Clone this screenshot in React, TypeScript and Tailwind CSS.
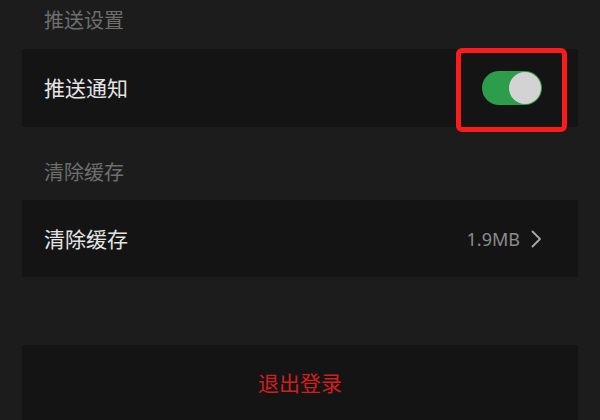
import React from "react";

const cjk = { fontFamily: '"Noto Sans CJK SC", "Noto Sans", sans-serif' };

function Toggle() {
  return (
    <div className="relative">
      <div className="w-[60px] h-[34px] rounded-full bg-[#2b9d4b] flex items-center justify-end pr-[1px]">
        <div className="w-[32px] h-[32px] rounded-full bg-[#d3d3d3]" />
      </div>
      <div className="absolute left-[-26px] top-[-23px] w-[111px] h-[84px] border-[5px] border-[#fb1b1b] rounded-[6px]" />
    </div>
  );
}

export default function App() {
  return (
    <div className="w-[600px] h-[420px] overflow-hidden bg-[#1c1c1c] flex flex-col" style={cjk}>
      <div className="h-[49px] pl-[44px] flex items-center text-[20px] text-[#6e6e6e] leading-none pb-[8px]">
        推送设置
      </div>
      <div className="mx-[22px] h-[79px] bg-[#141414] flex items-center justify-between pl-[22px] pr-[36px]">
        <span className="text-[21px] text-[#e4e4e4] leading-none">推送通知</span>
        <Toggle />
      </div>
      <div className="h-[74px] pl-[44px] flex items-center text-[20px] text-[#6e6e6e] leading-none pt-[16px]">
        清除缓存
      </div>
      <div className="mx-[22px] h-[78px] bg-[#141414] flex items-center justify-between pl-[22px] pr-[36px]">
        <span className="text-[21px] text-[#e4e4e4] leading-none">清除缓存</span>
        <div className="flex items-center gap-[11px]">
          <span className="text-[18px] text-[#8c8c8c] leading-none" style={{ fontFamily: '"Noto Sans", sans-serif' }}>
            1.9MB
          </span>
          <svg width="11" height="18" viewBox="0 0 11 18" fill="none">
            <path d="M1.5 1.5 L9 9 L1.5 16.5" stroke="#a8a8a8" strokeWidth="1.8" strokeLinecap="round" strokeLinejoin="round" />
          </svg>
        </div>
      </div>
      <div className="h-[68px]" />
      <div className="mx-[22px] h-[76px] bg-[#141414] flex items-center justify-center">
        <span className="text-[21px] text-[#d11f1f] leading-none">退出登录</span>
      </div>
    </div>
  );
}
